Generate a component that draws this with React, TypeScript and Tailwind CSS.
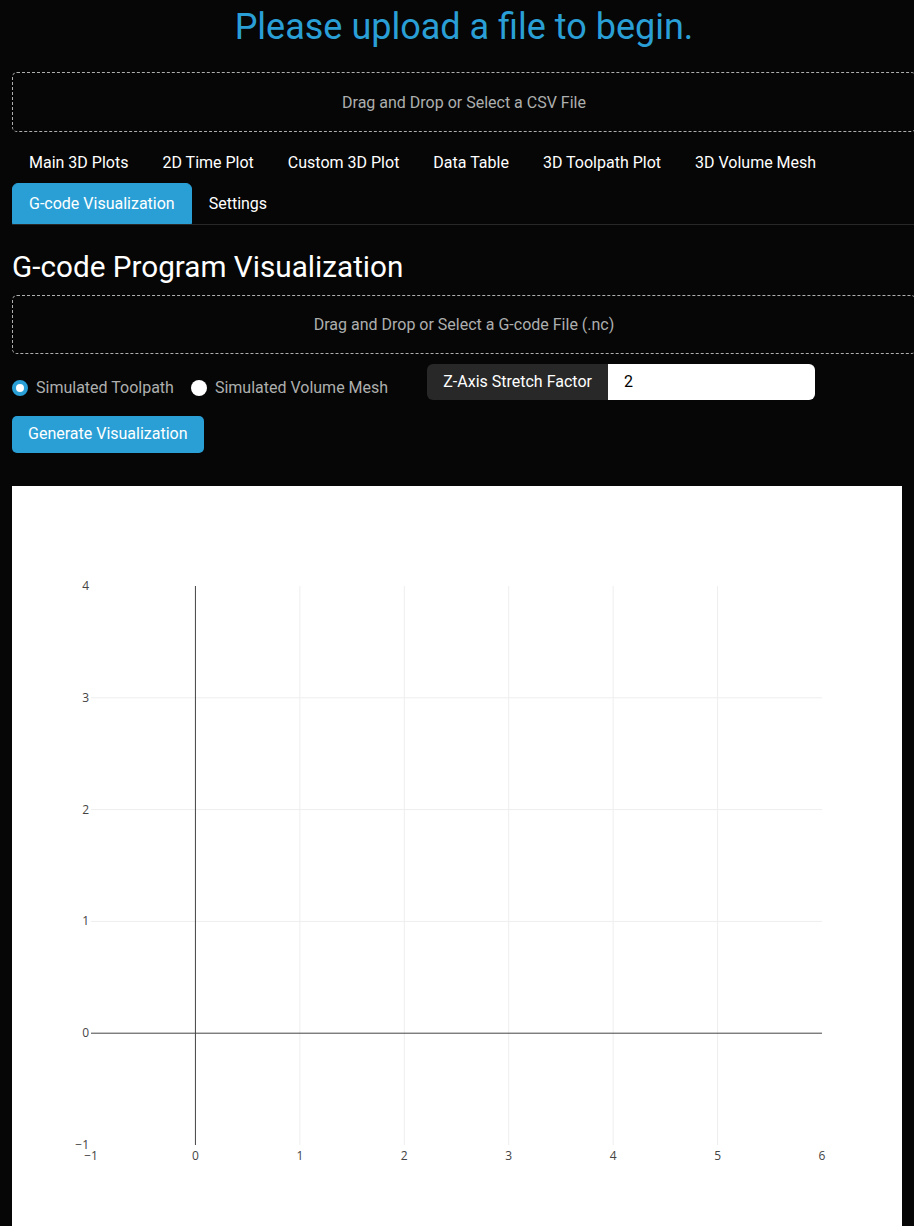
import { useState } from 'react';

const tabs = [
  'Main 3D Plots',
  '2D Time Plot',
  'Custom 3D Plot',
  'Data Table',
  '3D Toolpath Plot',
  '3D Volume Mesh',
  'G-code Visualization',
  'Settings',
];

// plot geometry (px inside the white figure)
const X0 = 79;
const X1 = 810;
const Y_TOP = 100;
const Y_BOT = 659;
const xPos = (v: number) => X0 + ((v + 1) / 7) * (X1 - X0);
const yPos = (v: number) => Y_BOT - ((v + 1) / 5) * (Y_BOT - Y_TOP);

const EmptyPlot = () => {
  const xs = [-1, 0, 1, 2, 3, 4, 5, 6];
  const ys = [-1, 0, 1, 2, 3, 4];
  return (
    <div className="w-[890px] h-[740px] bg-white">
      <svg width="890" height="740" className="block">
        {/* grid */}
        {[1, 2, 3, 4, 5].map((v) => (
          <line key={'gx' + v} x1={xPos(v)} x2={xPos(v)} y1={Y_TOP} y2={Y_BOT} stroke="#eeeeee" strokeWidth="1" />
        ))}
        {[1, 2, 3].map((v) => (
          <line key={'gy' + v} x1={X0} x2={X1} y1={yPos(v)} y2={yPos(v)} stroke="#eeeeee" strokeWidth="1" />
        ))}
        {/* zero lines */}
        <line x1={X0} x2={X1} y1={yPos(0)} y2={yPos(0)} stroke="#444444" strokeWidth="1" />
        <line x1={xPos(0)} x2={xPos(0)} y1={Y_TOP} y2={Y_BOT} stroke="#444444" strokeWidth="1" />
        {/* tick labels */}
        <g fontFamily="'Open Sans', Verdana, Arial, sans-serif" fontSize="12" fill="#444444">
          {xs.map((v) => (
            <text key={'tx' + v} x={xPos(v)} y={Y_BOT + 15} textAnchor="middle">
              {v < 0 ? '\u2212' + Math.abs(v) : v}
            </text>
          ))}
          {ys.map((v) => (
            <text key={'ty' + v} x={X0 - 2} y={yPos(v) + 4} textAnchor="end">
              {v < 0 ? '\u2212' + Math.abs(v) : v}
            </text>
          ))}
        </g>
      </svg>
    </div>
  );
};

const App = () => {
  const [mode, setMode] = useState<'toolpath' | 'mesh'>('toolpath');
  const [active, setActive] = useState('G-code Visualization');
  const [stretch, setStretch] = useState('2');

  return (
    <div className="min-h-screen bg-[#060606] overflow-hidden font-[Roboto,sans-serif]">
      <div className="w-[904px] ml-3">
        <h1 className="pt-[6px] text-center text-[36px] leading-[1.2] text-[#2a9fd6]">
          Please upload a file to begin.
        </h1>

        {/* CSV upload */}
        <div className="mt-[23px] h-[60px] flex items-center justify-center border border-dashed border-[#adafae] rounded-[5px] text-[16px] text-[#adafae] pt-px">
          Drag and Drop or Select a CSV File
        </div>

        {/* tabs */}
        <div className="mt-[10px] flex flex-wrap border-b border-[#282828]">
          {tabs.map((t) =>
            t === active ? (
              <button
                key={t}
                onClick={() => setActive(t)}
                className="h-[41px] px-4 text-[16px] text-white bg-[#2a9fd6] border border-[#2a9fd6] rounded-t-[6px] -mb-px"
              >
                {t}
              </button>
            ) : (
              <button
                key={t}
                onClick={() => setActive(t)}
                className="h-[41px] px-4 text-[16px] text-white border border-transparent"
              >
                {t}
              </button>
            )
          )}
        </div>

        <h2 className="mt-[24px] text-[29.7px] leading-[1.2] text-white">G-code Program Visualization</h2>

        {/* G-code upload */}
        <div className="mt-[10px] h-[59px] flex items-center justify-center border border-dashed border-[#adafae] rounded-[5px] text-[16px] text-[#adafae] pt-px">
          Drag and Drop or Select a G-code File (.nc)
        </div>

        {/* options row */}
        <div className="mt-[10px] h-[36px] flex items-start">
          <div className="mt-[13px] flex items-center">
            <label
              className="flex items-center gap-2 mr-[17px] text-[16px] leading-[22px] text-[#adafae] cursor-pointer"
              onClick={() => setMode('toolpath')}
            >
              <span
                className={
                  mode === 'toolpath'
                    ? 'w-4 h-4 rounded-full bg-white border-[4px] border-[#2a9fd6]'
                    : 'w-4 h-4 rounded-full bg-white'
                }
              />
              Simulated Toolpath
            </label>
            <label
              className="flex items-center gap-2 text-[16px] leading-[22px] text-[#adafae] cursor-pointer"
              onClick={() => setMode('mesh')}
            >
              <span
                className={
                  mode === 'mesh'
                    ? 'w-4 h-4 rounded-full bg-white border-[4px] border-[#2a9fd6]'
                    : 'w-4 h-4 rounded-full bg-white'
                }
              />
              Simulated Volume Mesh
            </label>
          </div>

          <div className="ml-[39px] flex h-[36px] rounded-[6px] overflow-hidden">
            <span className="w-[181px] flex items-center justify-center bg-[#282828] text-white text-[16px]">
              Z-Axis Stretch Factor
            </span>
            <input
              value={stretch}
              onChange={(e) => setStretch(e.target.value)}
              className="w-[207px] bg-white text-black text-[16px] px-4 outline-none"
            />
          </div>
        </div>

        <button className="mt-[16px] h-[37px] px-4 rounded-[5px] bg-[#2a9fd6] text-white text-[16px]">
          Generate Visualization
        </button>

        <div className="mt-[33px]">
          <EmptyPlot />
        </div>
      </div>
    </div>
  );
};

export default App;
